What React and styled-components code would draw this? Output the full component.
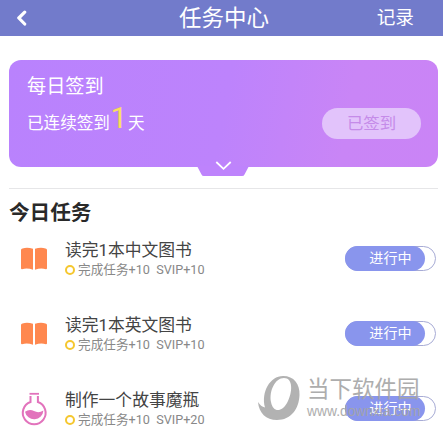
import React from 'react';
import styled, { createGlobalStyle } from 'styled-components';

const GlobalStyle = createGlobalStyle`
  * { box-sizing: border-box; }
  body {
    margin: 0;
    background: #fff;
    overflow: hidden;
    font-family: Roboto, "Noto Sans CJK SC", sans-serif;
  }
`;

const Page = styled.main`
  position: relative;
  width: 443px;
  height: 441px;
  overflow: hidden;
  background: #fff;
`;

const Header = styled.header`
  display: grid;
  grid-template-columns: 120px 1fr 120px;
  align-items: center;
  height: 36px;
  padding: 0 29px 0 16px;
  background: #727bcb;
  color: #fff;
`;

const BackIcon = styled.svg`
  display: block;
  width: 12px;
  height: 17px;
`;

const Title = styled.h1`
  margin: 0 0 0 18px;
  font-size: 22.5px;
  font-weight: 400;
  line-height: 36px;
  text-align: center;
  white-space: nowrap;
`;

const RecordLink = styled.span`
  font-size: 18.7px;
  line-height: 36px;
  text-align: right;
`;

const CheckInCard = styled.section`
  display: flex;
  justify-content: space-between;
  width: 429px;
  height: 107px;
  margin: 24px 0 0 9px;
  padding: 13px 17px 0 18px;
  border-radius: 12px;
  background: linear-gradient(100deg, #b982fd 0%, #bd83fc 50%, #c985f6 78%, #ca84f6 100%);
  color: #fff;
`;

const CheckInTitle = styled.h2`
  margin: 0;
  font-size: 19.2px;
  font-weight: 400;
  line-height: 28px;
`;

const Streak = styled.div`
  display: flex;
  align-items: flex-start;
  font-size: 16.6px;
  line-height: 46px;
`;

const StreakCount = styled.span`
  width: 18px;
  color: #f9df5b;
  font-size: 30px;
  line-height: 34px;
  text-align: center;
`;

const SignedButton = styled.button`
  width: 99px;
  height: 31px;
  margin-top: 35px;
  padding: 0;
  border: 0;
  border-radius: 16px;
  background: #e2c3fb;
  color: #c58be9;
  font: inherit;
  font-size: 16.4px;
  line-height: 31px;
`;

const ExpandTab = styled.svg`
  display: block;
  width: 52px;
  height: 10px;
  margin-left: 197px;
  overflow: visible;
`;

const Tasks = styled.section`
  width: 429px;
  margin: 11px 0 0 9px;
  border-top: 1px solid #e6e6e8;
`;

const TasksTitle = styled.h2`
  margin: 9px 0 0;
  color: #292929;
  font-size: 20.6px;
  font-weight: 700;
  line-height: 30px;
`;

const TaskRow = styled.article`
  display: grid;
  grid-template-columns: 56px 1fr 91px;
  align-items: center;
  width: 427px;
  height: 75px;
`;

const TaskList = styled.div`
  margin-top: -7px;
`;

const TaskIcon = styled.svg`
  display: block;
  width: 28px;
  height: 36px;
  margin-left: 11px;
`;

const TaskText = styled.div`
  padding-top: 1px;
`;

const TaskName = styled.h3`
  margin: 0;
  color: #444;
  font-size: 16.8px;
  font-weight: 400;
  line-height: 22px;
  white-space: nowrap;
`;

const Reward = styled.div`
  display: flex;
  align-items: center;
  height: 18px;
  color: #888;
  font-size: 12.65px;
  line-height: 18px;
  white-space: pre;
`;

const Coin = styled.span`
  width: 10px;
  height: 10px;
  margin-right: 3px;
  border: 2.5px solid #f5c72f;
  border-radius: 50%;
`;

const Progress = styled.div`
  width: 91px;
  height: 25px;
  border: 1px solid #a7abd5;
  border-radius: 13px;
  background: #fff;
`;

const ProgressFill = styled.div`
  width: 80px;
  height: 25px;
  margin: -1px 0 0 -1px;
  padding-left: 11px;
  border-radius: 13px;
  background: #8995ed;
  color: #fff;
  font-size: 14.1px;
  line-height: 25px;
  text-align: center;
`;

const Watermark = styled.aside`
  position: absolute;
  left: 257px;
  top: 375px;
  display: flex;
  gap: 7px;
  color: #a5a5a5;
  opacity: 0.9;
  pointer-events: none;
`;

const WatermarkLogo = styled.svg`
  width: 43px;
  height: 46px;
`;

const WatermarkName = styled.div`
  height: 27px;
  font-size: 22.5px;
  line-height: 28px;
  white-space: nowrap;
`;

const WatermarkUrl = styled.div`
  font-family: "Liberation Sans", sans-serif;
  font-size: 13.8px;
  line-height: 20px;
`;

function Book() {
  return (
    <TaskIcon viewBox="0 0 28 36" fill="#ff884f">
      <path d="M2.5 7.4Q7.5 6 13 7.8V28.8Q7.5 26.8 2 28.2Q1 28.2 1 27.2V9Q1 7.8 2.5 7.4Z" />
      <path d="M15 7.8Q20.5 6 25.5 7.4Q27 7.8 27 9V27.2Q27 28.2 26 28.2Q20.5 26.8 15 28.8Z" />
    </TaskIcon>
  );
}

function Flask() {
  return (
    <TaskIcon viewBox="0 0 28 36" fill="none" stroke="#e273bc">
      <path d="M9.5 2.8H19" strokeWidth="1.8" />
      <path d="M10.5 5V11A11.4 11.4 0 1 0 17.9 11V5" strokeWidth="2" />
      <path d="M5 20.8Q9.5 17.5 14 20T23.4 19.5A9.3 9.3 0 0 1 5 20.8Z" fill="#e273bc" stroke="none" />
    </TaskIcon>
  );
}

const tasks = [
  { name: '读完1本中文图书', reward: '完成任务+10  SVIP+10', Icon: Book },
  { name: '读完1本英文图书', reward: '完成任务+10  SVIP+10', Icon: Book },
  { name: '制作一个故事魔瓶', reward: '完成任务+10  SVIP+20', Icon: Flask },
];

export default function App() {
  return (
    <>
      <GlobalStyle />
      <Page>
        <Header>
          <BackIcon viewBox="0 0 12 17" fill="none" stroke="#fff" strokeWidth="3.2" strokeLinecap="round" strokeLinejoin="round">
            <path d="M8.7 2.2L2.8 8L8.7 14" />
          </BackIcon>
          <Title>任务中心</Title>
          <RecordLink>记录</RecordLink>
        </Header>
        <CheckInCard>
          <div>
            <CheckInTitle>每日签到</CheckInTitle>
            <Streak>已连续签到<StreakCount>1</StreakCount>天</Streak>
          </div>
          <SignedButton>已签到</SignedButton>
        </CheckInCard>
        <ExpandTab viewBox="0 0 52 10">
          <path d="M0-1H52L47.5 7.5Q47 9 45 9H7Q5 9 4.5 7.5Z" fill="#be83fc" />
          <path d="M19.3-5L26.5 1.8L33.7-5" fill="none" stroke="#fff" strokeWidth="1.8" />
        </ExpandTab>
        <Tasks>
          <TasksTitle>今日任务</TasksTitle>
          <TaskList>
            {tasks.map(({ name, reward, Icon }) => (
              <TaskRow key={name}>
                <Icon />
                <TaskText>
                  <TaskName>{name}</TaskName>
                  <Reward><Coin />{reward}</Reward>
                </TaskText>
                <Progress><ProgressFill>进行中</ProgressFill></Progress>
              </TaskRow>
            ))}
          </TaskList>
        </Tasks>
        <Watermark>
          <WatermarkLogo viewBox="0 0 43 46" fill="#aaa">
            <path fillRule="evenodd" d="M26 1C37 1 43 9 42.5 20C42 34 34 45 20 45C9 45 2 38 1 27C3 30 5 32 8 32.5C4 17 13 1 26 1ZM27 3C18 3 12 16 14 27C16 38 25 37 30 28C36 17 36 3 27 3Z" />
          </WatermarkLogo>
          <div>
            <WatermarkName>当下软件园</WatermarkName>
            <WatermarkUrl>www.downxia.com</WatermarkUrl>
          </div>
        </Watermark>
      </Page>
    </>
  );
}
